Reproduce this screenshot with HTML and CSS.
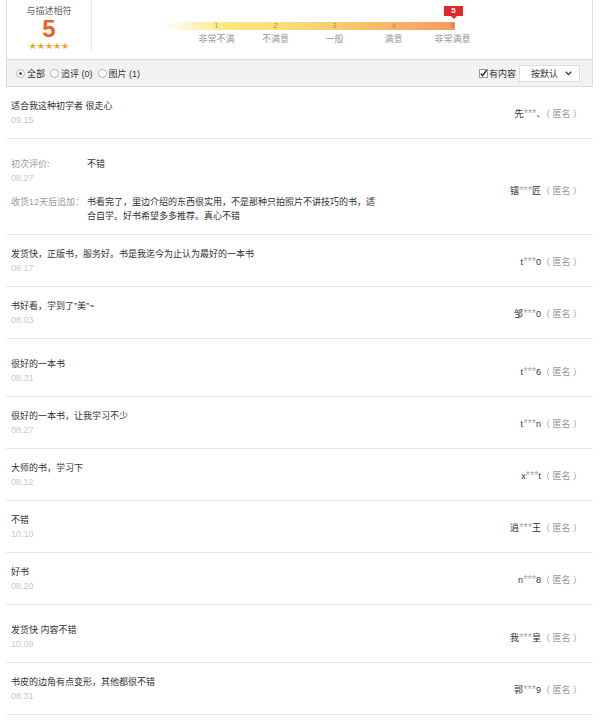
FILE: index.html
```html
<!DOCTYPE html>
<html lang="zh-CN">
<head>
  <meta charset="UTF-8">
  <meta name="viewport" content="width=device-width, initial-scale=1.0">
  <title>累计评价</title>
  <link rel="stylesheet" href="styles.css">
</head>
<body>
  <div class="pingjia">
    <div class="resumo">
      <div class="nota">
        <div class="nota-titulo">与描述相符</div>
        <div class="nota-num">5</div>
        <div class="nota-estrelas">★★★★★</div>
      </div>
      <div class="escala">
        <div class="barra">
          <span>1</span>
          <span>2</span>
          <span>3</span>
          <span>4</span>
          <span class="atual">5<i class="bandeira">5</i></span>
        </div>
        <div class="rotulos">
          <span>非常不满</span>
          <span>不满意</span>
          <span>一般</span>
          <span>满意</span>
          <span>非常满意</span>
        </div>
      </div>
    </div>

    <div class="filtro">
      <label class="opcao"><span class="radio marcado"></span>全部</label>
      <label class="opcao"><span class="radio"></span>追评 (0)</label>
      <label class="opcao"><span class="radio"></span>图片 (1)</label>
      <div class="filtro-dir">
        <label class="opcao conteudo">
          <svg class="check" width="9" height="9" viewBox="0 0 9 9"><rect x="0.5" y="0.5" width="8" height="8" fill="#fff" stroke="#999"/><path d="M1.8 4.6 L3.6 6.6 L7.6 1.2" fill="none" stroke="#222" stroke-width="1.4"/></svg>有内容
        </label>
        <button class="ordem">按默认
          <svg width="7" height="5" viewBox="0 0 7 5"><path d="M0.8 0.8 L3.5 3.6 L6.2 0.8" fill="none" stroke="#333" stroke-width="1.3"/></svg>
        </button>
      </div>
    </div>

    <ul class="lista">
      <li class="item">
        <div class="item-corpo">
          <p class="texto">适合我这种初学者 很走心</p>
          <p class="data">09.15</p>
        </div>
        <div class="autor">先<em>***</em>、<span class="anon">（ 匿名 ）</span></div>
      </li>
      <li class="item item-duplo">
        <div class="item-corpo">
          <div class="linha">
            <div class="rotulo">初次评价:<p class="data">08.27</p></div>
            <p class="texto">不错</p>
          </div>
          <div class="linha">
            <div class="rotulo">收货12天后追加：</div>
            <p class="texto largo">书看完了，里边介绍的东西很实用，不是那种只拍照片不讲技巧的书，适合自学。好书希望多多推荐。真心不错</p>
          </div>
        </div>
        <div class="autor">镭<em>***</em>匠<span class="anon">（ 匿名 ）</span></div>
      </li>
      <li class="item">
        <div class="item-corpo">
          <p class="texto">发货快，正版书，服务好。书是我迄今为止认为最好的一本书</p>
          <p class="data">08.17</p>
        </div>
        <div class="autor">t<em>***</em>0<span class="anon">（ 匿名 ）</span></div>
      </li>
      <li class="item">
        <div class="item-corpo">
          <p class="texto">书好看，学到了”美”~</p>
          <p class="data">08.03</p>
        </div>
        <div class="autor">邹<em>***</em>0<span class="anon">（ 匿名 ）</span></div>
      </li>
      <li class="item item-alto">
        <div class="item-corpo">
          <p class="texto">很好的一本书</p>
          <p class="data">08.31</p>
        </div>
        <div class="autor">t<em>***</em>6<span class="anon">（ 匿名 ）</span></div>
      </li>
      <li class="item">
        <div class="item-corpo">
          <p class="texto">很好的一本书，让我学习不少</p>
          <p class="data">08.27</p>
        </div>
        <div class="autor">t<em>***</em>n<span class="anon">（ 匿名 ）</span></div>
      </li>
      <li class="item">
        <div class="item-corpo">
          <p class="texto">大师的书，学习下</p>
          <p class="data">08.12</p>
        </div>
        <div class="autor">x<em>***</em>t<span class="anon">（ 匿名 ）</span></div>
      </li>
      <li class="item">
        <div class="item-corpo">
          <p class="texto">不错</p>
          <p class="data">10.10</p>
        </div>
        <div class="autor">逍<em>***</em>王<span class="anon">（ 匿名 ）</span></div>
      </li>
      <li class="item">
        <div class="item-corpo">
          <p class="texto">好书</p>
          <p class="data">08.20</p>
        </div>
        <div class="autor">n<em>***</em>8<span class="anon">（ 匿名 ）</span></div>
      </li>
      <li class="item item-alto">
        <div class="item-corpo">
          <p class="texto">发货快 内容不错</p>
          <p class="data">10.09</p>
        </div>
        <div class="autor">我<em>***</em>皇<span class="anon">（ 匿名 ）</span></div>
      </li>
      <li class="item">
        <div class="item-corpo">
          <p class="texto">书皮的边角有点变形，其他都很不错</p>
          <p class="data">08.31</p>
        </div>
        <div class="autor">郭<em>***</em>9<span class="anon">（ 匿名 ）</span></div>
      </li>
    </ul>
  </div>
</body>
</html>
```

FILE: styles.css
```css
body {
  margin: 0;
  background: #fff;
  font-family: Arial, "Liberation Sans", "Noto Sans CJK SC", sans-serif;
  font-size: 9px;
  color: #333;
}
p {
  margin: 0;
}
.pingjia {
  margin-left: 6px;
  width: 587px;
}

/* resumo da nota */
.resumo {
  display: flex;
  height: 59px;
  border-left: 1px solid #ddd;
  border-right: 1px solid #ddd;
  box-sizing: border-box;
}
.nota {
  width: 85px;
  height: 52px;
  border-right: 1px solid #e8e8e8;
  text-align: center;
  padding-top: 5px;
  box-sizing: border-box;
}
.nota-titulo {
  line-height: 12px;
  color: #666;
}
.nota-num {
  font-size: 24px;
  font-weight: bold;
  line-height: 24px;
  color: #e8661c;
}
.nota-estrelas {
  font-family: "DejaVu Sans", sans-serif;
  font-size: 9px;
  line-height: 10px;
  color: #f0a31c;
}
.escala {
  padding: 22px 0 0 72px;
}
.barra,
.rotulos {
  display: flex;
  width: 295px;
  padding-left: 23px;
}
.barra {
  height: 8px;
  background: linear-gradient(to right, rgba(255, 240, 150, 0) 0%, #fbe77e 22%, #fadb79 45%, #f8c56f 65%, #f7a862 88%, #f69c5c 100%) no-repeat;
  background-size: 291px 8px;
}
.barra span,
.rotulos span {
  flex: none;
  width: 59px;
  text-align: center;
}
.barra span {
  position: relative;
  font-size: 7px;
  line-height: 8px;
  color: #b09050;
}
.barra .atual {
  color: #c0703c;
}
.bandeira {
  position: absolute;
  left: 21px;
  bottom: 14px;
  width: 19px;
  height: 10px;
  background: #e2262e;
  color: #fff;
  font-style: normal;
  font-size: 8px;
  line-height: 10px;
  font-weight: bold;
}
.bandeira::after {
  content: "";
  position: absolute;
  left: 7px;
  top: 10px;
  border-left: 3px solid transparent;
  border-right: 3px solid transparent;
  border-top: 3px solid #e2262e;
}
.rotulos {
  margin-top: 3px;
}
.rotulos span {
  line-height: 12px;
  color: #999;
}

/* barra de filtro */
.filtro {
  display: flex;
  align-items: center;
  height: 28px;
  padding: 0 12px 0 9px;
  background: #f2f2f2;
  border: 1px solid #dcdcdc;
  box-sizing: border-box;
}
.opcao {
  display: flex;
  align-items: center;
  margin-right: 5px;
  color: #333;
}
.radio {
  width: 7px;
  height: 7px;
  border: 1px solid #b5b5b5;
  border-radius: 50%;
  background: #fff;
  margin-right: 2px;
  position: relative;
}
.radio.marcado::after {
  content: "";
  position: absolute;
  left: 2px;
  top: 2px;
  width: 3px;
  height: 3px;
  border-radius: 50%;
  background: #555;
}
.filtro-dir {
  margin-left: auto;
  display: flex;
  align-items: center;
}
.conteudo {
  margin-right: 3px;
}
.check {
  margin-right: 1px;
}
.ordem {
  display: flex;
  align-items: center;
  justify-content: space-between;
  width: 61px;
  height: 17px;
  padding: 0 7px 0 11px;
  border: 1px solid #ddd;
  background: #fff;
  font-family: inherit;
  font-size: 9px;
  color: #333;
}

/* lista de comentarios */
.lista {
  list-style: none;
  margin: 0;
  padding: 0;
}
.item {
  display: flex;
  align-items: center;
  padding: 12px 11px 11px 5px;
  border-bottom: 1px solid #e9e9e9;
}
.item-alto {
  padding-top: 18px;
}
.item-duplo {
  padding: 18px 11px 11px 5px;
}
.item-corpo {
  flex: 1;
}
.texto {
  line-height: 14px;
  color: #333;
}
.data {
  line-height: 14px;
  color: #c8c8c8;
}
.linha {
  display: flex;
}
.linha + .linha {
  margin-top: 10px;
}
.rotulo {
  width: 76px;
  line-height: 14px;
  color: #999;
}
.largo {
  width: 292px;
}
.autor {
  color: #333;
  white-space: nowrap;
}
.autor em {
  font-style: normal;
  font-size: 11px;
  line-height: 9px;
  color: #a8a8a8;
}
.anon {
  color: #999;
  white-space: pre;
}
```
